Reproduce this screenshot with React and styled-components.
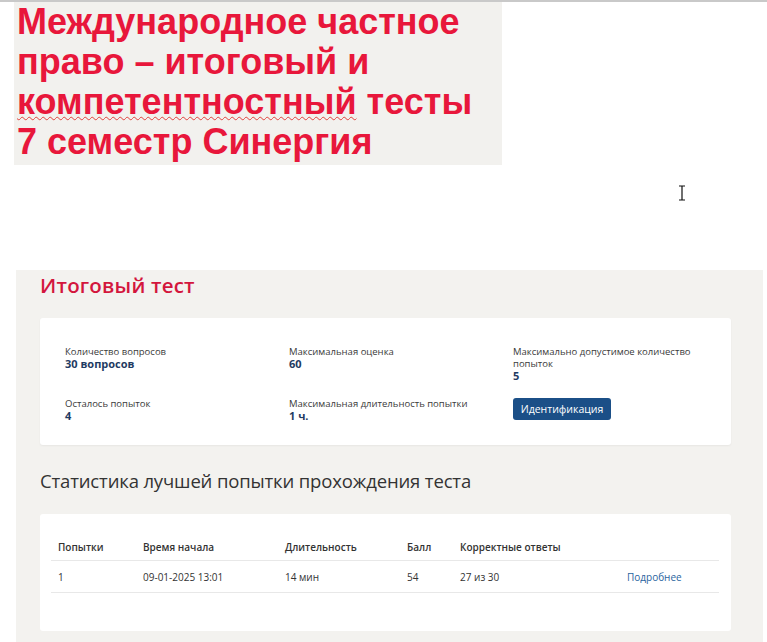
import styled, { createGlobalStyle } from "styled-components";

const Global = createGlobalStyle`
  body {
    margin: 0;
    background: #fff;
    font-family: "Open Sans", "Noto Sans", sans-serif;
  }
`;

const info = [
  { label: "Количество вопросов", value: "30 вопросов" },
  { label: "Максимальная оценка", value: "60" },
  { label: "Максимально допустимое количество попыток", value: "5" },
  { label: "Осталось попыток", value: "4" },
  { label: "Максимальная длительность попытки", value: "1 ч." },
];

const columns = [
  { title: "Попытки", w: 85 },
  { title: "Время начала", w: 142 },
  { title: "Длительность", w: 122 },
  { title: "Балл", w: 53 },
  { title: "Корректные ответы", w: 167 },
  { title: "", w: null },
];

const App = () => {
  return (
    <Page>
      <Global />
      <Banner>
        <BannerText>
          Международное частное
          <br />
          право – итоговый и
          <br />
          <Typo>компетентностный</Typo> тесты
          <br />7 семестр Синергия
        </BannerText>
      </Banner>
      <Cursor width="8" height="16" viewBox="0 0 8 16">
        <path d="M1 1h6M4 1v14M1 15h6" stroke="#111" strokeWidth="1.2" fill="none" />
      </Cursor>
      <Panel>
        <Title>Итоговый тест</Title>
        <Card>
          <InfoGrid>
            {info.map((item) => (
              <Info key={item.label}>
                <Label>{item.label}</Label>
                <Value>{item.value}</Value>
              </Info>
            ))}
            <Info>
              <Button>Идентификация</Button>
            </Info>
          </InfoGrid>
        </Card>
        <Subtitle>Статистика лучшей попытки прохождения теста</Subtitle>
        <TableCard>
          <Table>
            <colgroup>
              {columns.map((c, i) => (
                <col key={i} style={c.w ? { width: c.w } : undefined} />
              ))}
            </colgroup>
            <thead>
              <tr>
                {columns.map((c, i) => (
                  <Th key={i}>{c.title}</Th>
                ))}
              </tr>
            </thead>
            <tbody>
              <tr>
                <Td>1</Td>
                <Td>09-01-2025 13:01</Td>
                <Td>14 мин</Td>
                <Td>54</Td>
                <Td>27 из 30</Td>
                <Td>
                  <More>Подробнее</More>
                </Td>
              </tr>
            </tbody>
          </Table>
        </TableCard>
      </Panel>
    </Page>
  );
};

export default App;

const Page = styled.div`
  position: relative;
  width: 767px;
  height: 642px;
  overflow: hidden;
  border-top: 2px solid #c9c9c9;
  box-sizing: border-box;
`;

const Banner = styled.div`
  margin-left: 14px;
  width: 488px;
  height: 163px;
  background: #f2f1ee;
  box-sizing: border-box;
  padding: 0 0 0 3px;
`;

const BannerText = styled.h1`
  margin: 0;
  font-family: "Liberation Sans", Arial, sans-serif;
  font-weight: 700;
  font-size: 36px;
  line-height: 40px;
  color: #e8173b;
  white-space: nowrap;
`;

const Typo = styled.span`
  text-decoration-line: underline;
  text-decoration-style: wavy;
  text-decoration-color: #e0413c;
  text-decoration-thickness: 1px;
  text-underline-offset: 2px;
`;

const Cursor = styled.svg`
  position: absolute;
  left: 678px;
  top: 183px;
`;

const Panel = styled.section`
  margin: 105px 4px 0 16px;
  height: 372px;
  background: #f3f2ef;
  padding: 0 32px 0 24px;
  box-sizing: border-box;
`;

const Title = styled.h2`
  margin: 0;
  padding-top: 1px;
  height: 48px;
  font-size: 20.5px;
  font-weight: 600;
  color: #d3163d;
  letter-spacing: 0.2px;
  box-sizing: border-box;
`;

const Card = styled.div`
  background: #fff;
  border-radius: 3px;
  box-shadow: 0 1px 2px rgba(0, 0, 0, 0.05);
  padding: 28px 25px 25px 25px;
  height: 127px;
  box-sizing: border-box;
`;

const InfoGrid = styled.div`
  display: grid;
  grid-template-columns: 224px 224px 200px;
  row-gap: 12px;
`;

const Info = styled.div`
  display: flex;
  flex-direction: column;
  min-height: 40px;
`;

const Label = styled.div`
  font-size: 9.5px;
  line-height: 12px;
  color: #3a3a3a;
  width: 190px;
`;

const Value = styled.div`
  font-size: 11px;
  line-height: 12px;
  font-weight: 700;
  color: #1f3b62;
`;

const Button = styled.button`
  align-self: flex-start;
  margin-top: 0;
  height: 22px;
  width: 98px;
  padding: 0;
  border: none;
  border-radius: 3px;
  background: #1b4f87;
  color: #fff;
  font-family: inherit;
  font-size: 10.5px;
`;

const Subtitle = styled.h3`
  margin: 0;
  height: 69px;
  line-height: 72px;
  font-size: 18.5px;
  font-weight: 400;
  color: #333;
  letter-spacing: -0.15px;
`;

const TableCard = styled.div`
  background: #fff;
  border-radius: 3px;
  padding: 26px 12px 39px 11px;
  height: 117px;
  box-sizing: border-box;
`;

const Table = styled.table`
  width: 100%;
  table-layout: fixed;
  border-collapse: collapse;
  font-size: 10px;
  color: #333;
`;

const Th = styled.th`
  text-align: left;
  font-weight: 600;
  padding: 0 0 6px 7px;
  border-bottom: 1px solid #e8e8e8;
  height: 14px;
  white-space: nowrap;
`;

const Td = styled.td`
  padding: 9px 0 8px 7px;
  border-bottom: 1px solid #e8e8e8;
  font-weight: 400;
  white-space: nowrap;
`;

const More = styled.a`
  color: #2a64a0;
  cursor: pointer;
`;
